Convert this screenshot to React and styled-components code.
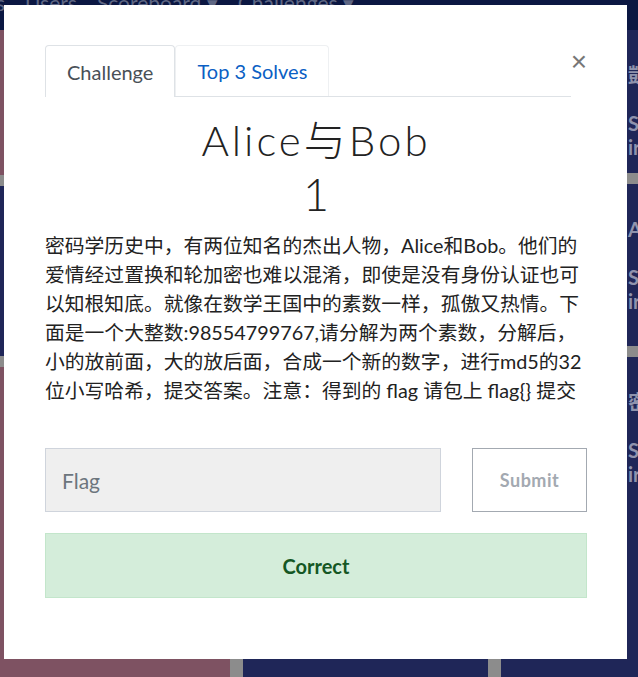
import React from 'react';
import styled, { createGlobalStyle } from 'styled-components';

const GlobalStyle = createGlobalStyle`
  html, body {
    margin: 0;
    padding: 0;
    background: #1f2658;
    overflow: hidden;
  }
  body {
    font-family: Lato, "Noto Sans CJK SC", sans-serif;
  }
`;

const Page = styled.div`
  position: relative;
  width: 638px;
  height: 677px;
  overflow: hidden;
  background: #1f2658;
`;

const NavBar = styled.div`
  height: 30px;
  background: #0b1742;
  display: flex;
  align-items: flex-start;
  gap: 20px;
  margin-top: -7px;
  margin-left: -4px;
  padding-bottom: 7px;
  box-sizing: content-box;
  font-size: 21px;
  line-height: 20px;
  color: #5f6784;
`;

const NavItem = styled.span`
  white-space: nowrap;
`;

const Board = styled.div`
  display: grid;
  grid-template-columns: 230px 245px 257px;
  column-gap: 13px;
  background: #8c8c8c;
`;

const Column = styled.div`
  display: flex;
  flex-direction: column;
  gap: 11px;
  background: #8c8c8c;
`;

const Card = styled.div`
  height: ${(p) => p.$h}px;
  background: ${(p) => (p.$pink ? '#7e5262' : '#1f2658')};
  display: flex;
  flex-direction: column;
  padding: 33px 0 0 ${(p) => p.$pad || 0}px;
  box-sizing: border-box;
  color: #8f93ad;
  font-weight: 700;
  font-size: 20px;
  line-height: 24px;
`;

const CardLine = styled.div`
  margin-bottom: ${(p) => p.$mb || 0}px;
  white-space: nowrap;
`;

const Modal = styled.div`
  position: absolute;
  left: 4px;
  top: 5px;
  width: 623px;
  box-sizing: border-box;
  background: #fff;
  padding: 40px 40px 61px 41px;
  color: #212529;
`;

const Header = styled.div`
  display: flex;
  align-items: flex-start;
`;

const Tabs = styled.div`
  flex: 1;
  display: flex;
  border-bottom: 1px solid #dee2e6;
`;

const Tab = styled.div`
  padding: 0 21px;
  display: flex;
  align-items: center;
  font-size: 20px;
  border: 1px solid ${(p) => (p.$active ? '#dee2e6' : '#eef0f2')};
  border-bottom: none;
  border-radius: 4px 4px 0 0;
  margin-bottom: ${(p) => (p.$active ? '-1px' : '0')};
  height: ${(p) => (p.$active ? '52px' : '51px')};
  background: #fff;
  color: ${(p) => (p.$active ? '#495057' : '#0b5fc4')};
  box-sizing: border-box;
`;

const Close = styled.button`
  flex: 0 0 16px;
  margin-top: 4px;
  padding: 0;
  background: none;
  border: none;
  font-family: "Liberation Sans", Arial, sans-serif;
  font-size: 28px;
  line-height: 26px;
  color: #777;
  text-align: right;
`;

const Title = styled.h2`
  margin: 18px 0 0;
  text-align: center;
  font-weight: 300;
  font-size: 42px;
  line-height: 50px;
  letter-spacing: 3px;
  color: #222;
`;

const Value = styled.h3`
  margin: 7px 0 0;
  text-align: center;
  font-weight: 300;
  font-size: 45px;
  line-height: 44px;
  color: #222;
`;

const Description = styled.p`
  margin: 15px 0 0;
  font-size: 19.8px;
  line-height: 29px;
  color: #222;
  word-break: break-all;
`;

const FormRow = styled.div`
  display: flex;
  gap: 31px;
  margin-top: 43px;
`;

const FlagInput = styled.input`
  flex: 1;
  height: 64px;
  box-sizing: border-box;
  background: #efefef;
  border: 1px solid #cfd4dc;
  padding: 0 16px;
  font-family: Lato, sans-serif;
  font-size: 21px;
  color: #495057;
  outline: none;
  &::placeholder {
    color: #6c757d;
  }
`;

const SubmitButton = styled.button`
  width: 115px;
  height: 64px;
  box-sizing: border-box;
  background: #fff;
  border: 1px solid #a3a9b1;
  font-family: Lato, sans-serif;
  font-weight: 700;
  font-size: 18px;
  color: #a3a9b1;
  letter-spacing: 0.5px;
`;

const Alert = styled.div`
  margin-top: 21px;
  height: 65px;
  box-sizing: border-box;
  background: #d4edda;
  border: 1px solid #c3e6cb;
  color: #155724;
  display: flex;
  align-items: center;
  justify-content: center;
  font-size: 20px;
  font-weight: 700;
`;

const columns = [
  [
    { h: 145, pink: true },
    { h: 170 },
    { h: 330, pink: true },
  ],
  [
    { h: 145 },
    { h: 170 },
    { h: 330 },
  ],
  [
    { h: 143, lines: ['凱', 'So', 'ir'] },
    { h: 162, lines: ['A', 'So', 'ir'] },
    { h: 330, lines: ['密', 'So', 'ir'] },
  ],
];

const description =
  '密码学历史中，有两位知名的杰出人物，Alice和Bob。他们的爱情经过置换和轮加密也难以混淆，即使是没有身份认证也可以知根知底。就像在数学王国中的素数一样，孤傲又热情。下面是一个大整数:98554799767,请分解为两个素数，分解后，小的放前面，大的放后面，合成一个新的数字，进行md5的32位小写哈希，提交答案。注意：得到的 flag 请包上 flag{} 提交';

export default function App() {
  return (
    <>
      <GlobalStyle />
      <Page>
        <NavBar>
          <NavItem>s</NavItem>
          <NavItem>Users</NavItem>
          <NavItem>Scoreboard ▾</NavItem>
          <NavItem>Challenges ▾</NavItem>
        </NavBar>
        <Board>
          {columns.map((col, i) => (
            <Column key={i}>
              {col.map((card, j) => (
                <Card key={j} $h={card.h} $pink={card.pink} $pad={i === 2 ? 127 : 0}>
                  {card.lines &&
                    card.lines.map((l, k) => (
                      <CardLine key={k} $mb={k === 0 ? 24 : 0}>
                        {l}
                      </CardLine>
                    ))}
                </Card>
              ))}
            </Column>
          ))}
        </Board>
        <Modal>
          <Header>
            <Tabs>
              <Tab $active>Challenge</Tab>
              <Tab>Top 3 Solves</Tab>
            </Tabs>
            <Close>×</Close>
          </Header>
          <Title>Alice与Bob</Title>
          <Value>1</Value>
          <Description>{description}</Description>
          <FormRow>
            <FlagInput placeholder="Flag" />
            <SubmitButton>Submit</SubmitButton>
          </FormRow>
          <Alert>Correct</Alert>
        </Modal>
      </Page>
    </>
  );
}
